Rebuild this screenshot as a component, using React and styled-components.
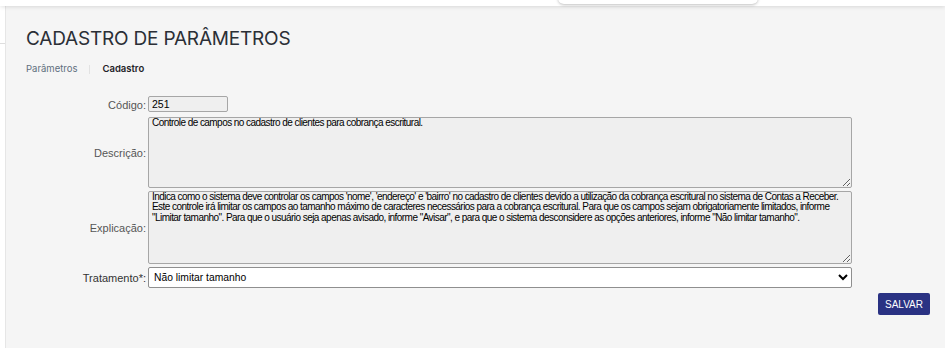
import styled, { createGlobalStyle } from 'styled-components';

const GlobalStyle = createGlobalStyle`
  html, body {
    margin: 0;
    padding: 0;
    background: #f5f5f5;
  }
  body {
    font-family: 'Liberation Sans', Arial, sans-serif;
  }
`;

const Page = styled.div`
  width: 945px;
  height: 348px;
  overflow: hidden;
  display: grid;
  grid-template-rows: 6px 1fr;
  background: #f5f5f5;
`;

const TopBar = styled.header`
  position: relative;
  z-index: 2;
  background: #fff;
  box-shadow: 0 1px 4px rgba(0, 0, 0, 0.12);
`;

const SearchBox = styled.div`
  position: absolute;
  left: 558px;
  bottom: 2px;
  width: 200px;
  height: 20px;
  background: #fff;
  border-radius: 0 0 6px 6px;
  box-shadow: 0 1px 3px rgba(0, 0, 0, 0.25);
`;

const Body = styled.div`
  display: grid;
  grid-template-columns: 6px 1fr;
`;

const SideStrip = styled.aside`
  background: #fff;
  border-right: 1px solid #e6e6e6;
  display: flex;
  flex-direction: column;
  padding-top: 37px;
`;

const SideLine = styled.div`
  height: 1px;
  background: #dedede;
`;

const Main = styled.main`
  padding: 20px 0 0 20px;
`;

const Title = styled.h1`
  margin: 0;
  font-family: Inter, 'Noto Sans', sans-serif;
  font-weight: 400;
  font-size: 19px;
  letter-spacing: -0.2px;
  color: #2b2f36;
  line-height: 26px;
`;

const Crumbs = styled.nav`
  display: flex;
  align-items: center;
  gap: 12px;
  margin-top: 11px;
  font-family: Inter, 'Noto Sans', sans-serif;
  font-size: 9.5px;
  line-height: 12px;
`;

const Crumb = styled.span`
  color: ${(p) => (p.$current ? '#1e2228' : '#5f6f7e')};
  font-weight: ${(p) => (p.$current ? 600 : 400)};
`;

const Sep = styled.span`
  width: 1px;
  height: 9px;
  background: #e2e2e2;
`;

const Form = styled.form`
  display: grid;
  grid-template-columns: 120px 704px 1fr;
  column-gap: 2px;
  row-gap: 3px;
  margin-top: 21px;
  font-size: 11px;
`;

const Label = styled.label`
  grid-column: 1;
  display: flex;
  align-items: center;
  justify-content: flex-end;
  color: ${(p) => (p.$strong ? '#333' : '#555')};
`;

const Field = styled.div`
  grid-column: 2;
  display: flex;
  margin-bottom: ${(p) => p.$gap || 0}px;
`;

const TextInput = styled.input`
  box-sizing: border-box;
  width: 80px;
  height: 16px;
  padding: 0 3px;
  font: 10.5px 'Liberation Sans', Arial, sans-serif;
  color: #000;
  background: #efefef;
  border: 1px solid #a6a6a6;
  border-radius: 2px;
`;

const TextArea = styled.textarea`
  box-sizing: border-box;
  width: 704px;
  height: ${(p) => p.$h}px;
  margin: 0;
  padding: 0 3px;
  font: 10px/10.4px 'Liberation Sans', Arial, sans-serif;
  letter-spacing: -0.55px;
  word-spacing: 0;
  color: #000;
  background: #efefef;
  border: 1px solid #a6a6a6;
  border-radius: 2px;
  overflow: hidden;
  resize: vertical;
  &:disabled {
    color: #000;
  }
`;

const Select = styled.select`
  box-sizing: border-box;
  width: 704px;
  height: 21px;
  padding: 0 1px;
  font: 10.3px 'Liberation Sans', Arial, sans-serif;
  color: #000;
  background: #fff;
  border: 1px solid #8f8f8f;
  border-radius: 2px;
`;

const Actions = styled.div`
  grid-column: 1 / 3;
  display: flex;
  justify-content: flex-end;
  margin-top: 2px;
  margin-right: -78px;
`;

const SaveButton = styled.button`
  height: 22px;
  padding: 0 7px;
  font: 10px 'Liberation Sans', Arial, sans-serif;
  color: #fff;
  background: #2a3283;
  border: none;
  border-radius: 2px;
  cursor: pointer;
`;

const explanation =
  'Indica como o sistema deve controlar os campos \'nome\', \'endereço\' e \'bairro\' no cadastro de clientes devido a utilização da cobrança escritural no sistema de Contas a Receber. Este controle irá limitar os campos ao tamanho máximo de caracteres necessários para a cobrança escritural. Para que os campos sejam obrigatoriamente limitados, informe "Limitar tamanho". Para que o usuário seja apenas avisado, informe "Avisar", e para que o sistema desconsidere as opções anteriores, informe "Não limitar tamanho".';

export default function App() {
  return (
    <>
      <GlobalStyle />
      <Page>
        <TopBar>
          <SearchBox />
        </TopBar>
        <Body>
          <SideStrip>
            <SideLine />
          </SideStrip>
          <Main>
            <Title>CADASTRO DE PARÂMETROS</Title>
            <Crumbs>
              <Crumb>Parâmetros</Crumb>
              <Sep />
              <Crumb $current>Cadastro</Crumb>
            </Crumbs>
            <Form onSubmit={(e) => e.preventDefault()}>
              <Label>Código:</Label>
              <Field $gap={2}>
                <TextInput value="251" disabled readOnly />
              </Field>
              <Label>Descrição:</Label>
              <Field>
                <TextArea
                  $h={71}
                  disabled
                  value="Controle de campos no cadastro de clientes para cobrança escritural."
                  readOnly
                />
              </Field>
              <Label>Explicação:</Label>
              <Field>
                <TextArea $h={73} disabled value={explanation} readOnly />
              </Field>
              <Label $strong>Tratamento*:</Label>
              <Field>
                <Select defaultValue="nao">
                  <option value="limitar">Limitar tamanho</option>
                  <option value="avisar">Avisar</option>
                  <option value="nao">Não limitar tamanho</option>
                </Select>
              </Field>
              <Actions>
                <SaveButton type="submit">SALVAR</SaveButton>
              </Actions>
            </Form>
          </Main>
        </Body>
      </Page>
    </>
  );
}
